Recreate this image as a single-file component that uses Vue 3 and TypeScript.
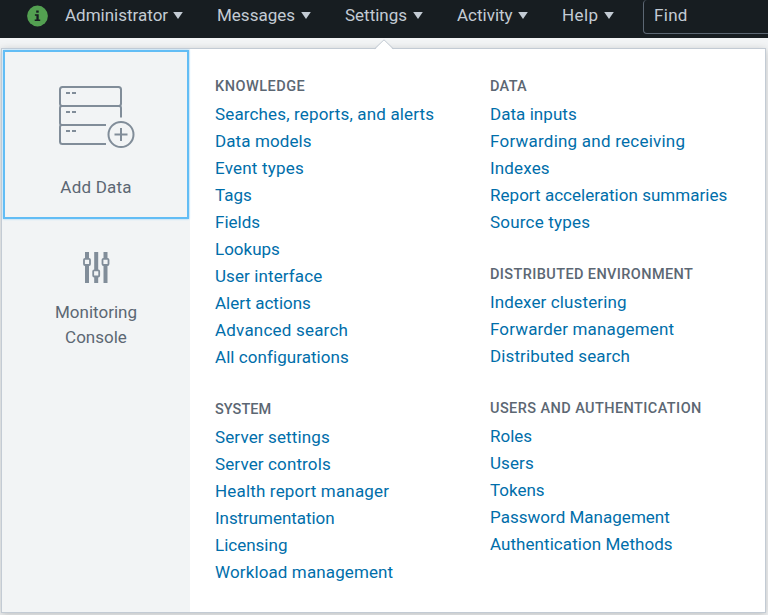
<script setup lang="ts">
interface Label {
  text: string
  tracking: number
}
interface Group {
  title: Label
  links: Label[]
}

const menus: string[] = ['Administrator', 'Messages', 'Settings', 'Activity', 'Help']

const l = (text: string, tracking = 0): Label => ({ text, tracking })

const columns: Group[][] = [
  [
    {
      title: l('KNOWLEDGE', 0.5),
      links: [
        l('Searches, reports, and alerts', 0.15),
        l('Data models', 0.1),
        l('Event types', 0.2),
        l('Tags'),
        l('Fields'),
        l('Lookups'),
        l('User interface', 0.1),
        l('Alert actions'),
        l('Advanced search', 0.2),
        l('All configurations', 0.06),
      ],
    },
    {
      title: l('SYSTEM', 0.05),
      links: [
        l('Server settings', 0.13),
        l('Server controls', 0.13),
        l('Health report manager', 0.17),
        l('Instrumentation', -0.06),
        l('Licensing'),
        l('Workload management', 0.12),
      ],
    },
  ],
  [
    {
      title: l('DATA', 0.3),
      links: [
        l('Data inputs', 0.05),
        l('Forwarding and receiving', 0.23),
        l('Indexes', 0.15),
        l('Report acceleration summaries', 0.03),
        l('Source types', 0.2),
      ],
    },
    {
      title: l('DISTRIBUTED ENVIRONMENT', 0.39),
      links: [l('Indexer clustering', 0.12), l('Forwarder management', 0.15), l('Distributed search', 0.12)],
    },
    {
      title: l('USERS AND AUTHENTICATION', 0.42),
      links: [
        l('Roles'),
        l('Users', 0.1),
        l('Tokens'),
        l('Password Management', 0.02),
        l('Authentication Methods', 0.06),
      ],
    },
  ],
]
</script>

<template>
  <div class="page">
    <header class="nav">
      <svg class="info" width="22" height="22" viewBox="0 0 22 22">
        <circle cx="11.500" cy="11" r="10.400" fill="#53a051" />
        <rect x="10.200" y="5.500" width="2.500" height="2.200" fill="#171d21" />
        <path d="M8.900 9.200h3.800v5.200h1.500v1.500H8.700v-1.500h1.700v-3.700H8.900z" fill="#171d21" />
      </svg>
      <a v-for="m in menus" :key="m" class="menu" :class="m.toLowerCase()">
        <span>{{ m }}</span>
        <svg width="10" height="7" viewBox="0 0 10 7"><path d="M.2 0h9.600L5 7z" fill="#c3cbd4" /></svg>
      </a>
      <div class="find">Find</div>
    </header>

    <section class="panel">
      <svg class="pointer" width="20" height="11" viewBox="0 0 20 11">
        <path d="M1 10.500L10 1.200l9 9.300V11H1z" fill="#fff" />
        <path d="M.8 9.600L10 .8l9.200 8.800" fill="none" stroke="#c3cbd4" />
      </svg>
      <aside class="side">
        <a class="tile focused">
          <svg class="servers" width="78" height="64" viewBox="0 0 78 64" fill="none" stroke="#818d99" stroke-width="2">
            <path d="M63 31.500V22q0-2-2-2H4q-2 0-2 2v15q0 2 2 2h44" />
            <rect x="2" y="1" width="61" height="19" rx="2.500" />
            <path d="M4 39q-2 0-2 2v14.500q0 2.500 2.500 2.500H48" />
            <path d="M8 7h4M14 7h4M8 26h4M14 26h4M8 45h4M14 45h4" />
            <circle cx="63" cy="48.500" r="12.500" />
            <path d="M56.500 48.500h13M63 42v13" />
          </svg>
          <span>Add Data</span>
        </a>
        <a class="tile console">
          <svg width="28" height="32" viewBox="0 0 28 32">
            <path d="M3 0h4v31H3zM12.200 0h4v31h-4zM21.500 0h4v31h-4z" fill="#818d99" />
            <g fill="#f2f4f5" stroke="#818d99" stroke-width="1.800">
              <rect x="2" y="6.800" width="6" height="6.200" rx="1" />
              <rect x="11.200" y="18.300" width="6" height="6.200" rx="1" />
              <rect x="20.500" y="6.800" width="6" height="6.200" rx="1" />
            </g>
          </svg>
          <span>Monitoring<br />Console</span>
        </a>
      </aside>
      <div class="columns">
        <div v-for="(col, i) in columns" :key="i" class="column">
          <section v-for="g in col" :key="g.title.text" class="group">
            <h3><span :style="{ letterSpacing: g.title.tracking + 'px' }">{{ g.title.text }}</span></h3>
            <a v-for="k in g.links" :key="k.text"><span :style="{ letterSpacing: k.tracking + 'px' }">{{ k.text }}</span></a>
          </section>
        </div>
      </div>
    </section>
  </div>
</template>

<style>
body {
  margin: 0;
  overflow: hidden;
}
</style>

<style scoped>
* {
  box-sizing: border-box;
}
.page {
  width: 768px;
  height: 615px;
  overflow: hidden;
  background: #f2f4f5;
  font-family: Roboto, "Liberation Sans", sans-serif;
  font-size: 17px;
}
.nav {
  height: 38px;
  background: #171d21;
  color: #c3cbd4;
  display: flex;
  align-items: flex-start;
  padding-left: 26px;
}
.info {
  flex: none;
  margin: 5px 17px 0 0;
}
.menu {
  flex: none;
  display: flex;
  align-items: center;
  justify-content: space-between;
  height: 30px;
  margin-right: 34px;
}
.administrator { width: 118px; }
.messages { width: 94px; }
.settings { width: 78px; }
.activity { width: 71px; }
.help { width: 52px; margin-right: 29px; letter-spacing: 0.4px; }
.find {
  flex: none;
  width: 140px;
  height: 34px;
  border: 1px solid #5c6773;
  border-top: 0;
  border-radius: 4px;
  padding-left: 10px;
  line-height: 31px;
  letter-spacing: 0.3px;
}
.panel {
  position: relative;
  display: flex;
  width: 765px;
  height: 565px;
  margin: 10px 0 0 1px;
  border: 1px solid #c3cbd4;
  background: #fff;
  box-shadow: 0 2px 8px rgba(0, 0, 0, 0.22);
}
.pointer {
  position: absolute;
  left: 372px;
  top: -10px;
}
.side {
  width: 188px;
  background: #f2f4f5;
  color: #5c6773;
}
.tile {
  display: flex;
  flex-direction: column;
  align-items: center;
  text-align: center;
  line-height: 25px;
}
.focused {
  height: 169px;
  margin: 1px 1px 0;
  border: 2px solid #62bdf5;
  padding-top: 34px;
  box-shadow: 0 0 2px #8fd0f8;
  letter-spacing: 0.2px;
}
.servers {
  margin: 0 0 25px 1px;
}
.console {
  padding-top: 33px;
  gap: 16px;
}
.columns {
  display: flex;
  padding: 23px 0 0 25px;
}
.column {
  display: flex;
  flex-direction: column;
  gap: 25px;
  width: 275px;
}
.group {
  display: flex;
  flex-direction: column;
  white-space: nowrap;
}
.group h3 {
  margin: 0;
  height: 28px;
  line-height: 29px;
  font-size: 14.500px;
  font-weight: 500;
  color: #5c6773;
}
.group a {
  height: 27px;
  line-height: 29px;
  color: #006eaa;
}
</style>
